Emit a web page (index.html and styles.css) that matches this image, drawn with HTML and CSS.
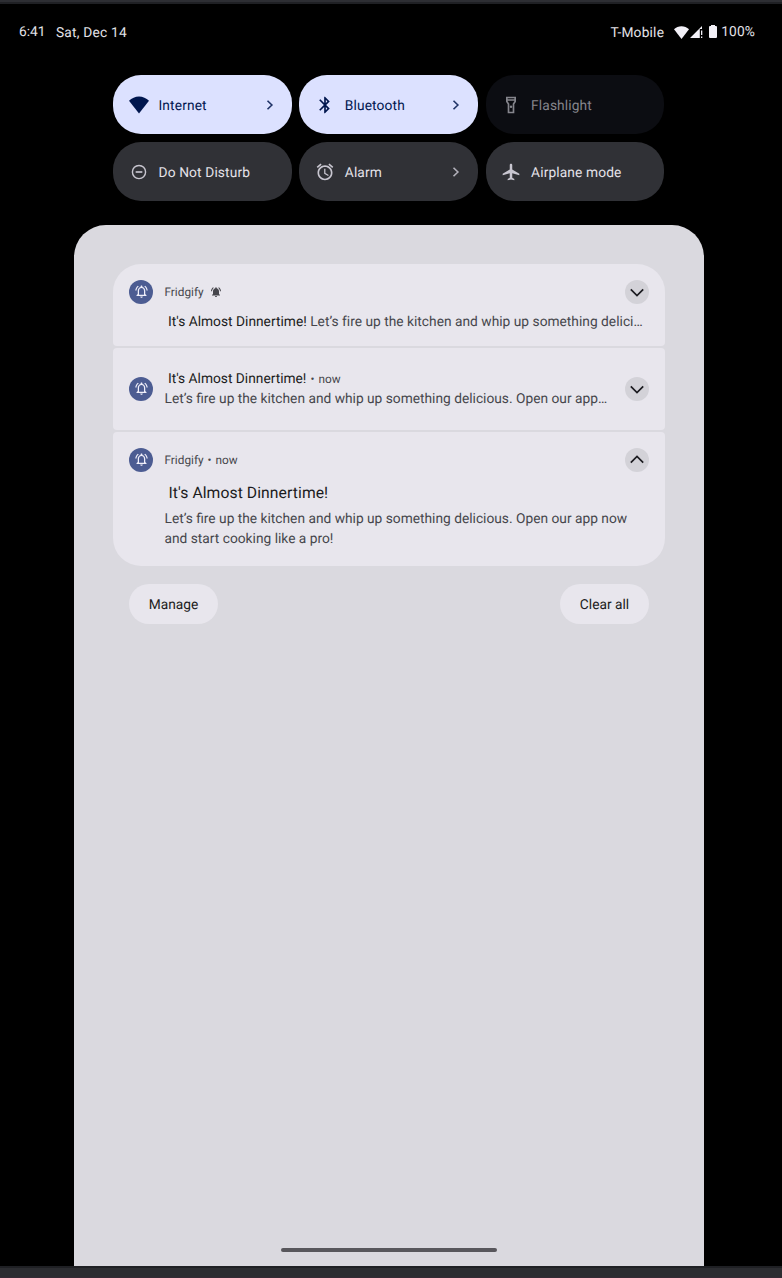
FILE: index.html
```html
<!DOCTYPE html>
<html lang="en">
<head>
<meta charset="utf-8">
<title>Notifications</title>
<link rel="stylesheet" href="styles.css">
</head>
<body>
<svg class="defs" width="0" height="0" aria-hidden="true">
  <symbol id="bell" viewBox="0 0 24 24"><path d="M12 22c1.100 0 2-.9 2-2h-4c0 1.100.9 2 2 2zm6-6v-5c0-3.070-1.630-5.640-4.500-6.320V4c0-.83-.67-1.500-1.500-1.500s-1.500.67-1.500 1.500v.68C7.640 5.360 6 7.920 6 11v5l-2 2v1h16v-1l-2-2zm-2 1H8v-6c0-2.480 1.510-4.500 4-4.500s4 2.020 4 4.500v6zM7.580 4.080L6.150 2.650C3.750 4.480 2.170 7.300 2.030 10.500h2c.15-2.650 1.510-4.970 3.550-6.420zm12.390 6.420h2c-.15-3.200-1.730-6.020-4.120-7.850l-1.420 1.430c2.020 1.450 3.390 3.770 3.540 6.420z"/></symbol>
  <symbol id="bell-solid" viewBox="0 0 24 24"><path d="M12 22c1.100 0 2-.9 2-2h-4c0 1.100.9 2 2 2zm6-6v-5c0-3.070-1.630-5.640-4.500-6.320V4c0-.83-.67-1.500-1.500-1.500s-1.500.67-1.500 1.500v.68C7.640 5.360 6 7.920 6 11v5l-2 2v1h16v-1l-2-2zM7.580 4.080L6.150 2.650C3.750 4.480 2.170 7.300 2.030 10.500h2c.15-2.650 1.510-4.970 3.550-6.420zm12.390 6.420h2c-.15-3.200-1.730-6.020-4.120-7.850l-1.420 1.430c2.020 1.450 3.390 3.770 3.540 6.420z"/></symbol>
  <symbol id="wifi" viewBox="0 0 20 17"><path d="M0 4.300C2.800 1.600 6.200 0 10 0s7.200 1.600 10 4.300L10 17z"/></symbol>
  <symbol id="next" viewBox="0 0 8 12"><path d="M1.500 1.700 5.900 6 1.500 10.300" fill="none" stroke="currentColor" stroke-width="1.600"/></symbol>
  <symbol id="down" viewBox="0 0 24 24"><path d="m5.800 9.300 6.200 6.200 6.200-6.200" fill="none" stroke="currentColor" stroke-width="1.700"/></symbol>
</svg>
<div class="screen">
  <header class="status">
    <span class="time">6:41</span>
    <span class="date">Sat, Dec 14</span>
    <span class="carrier">T-Mobile</span>
    <svg class="status-wifi"><use href="#wifi"/></svg>
    <svg class="signal" viewBox="0 0 13 12"><path d="M0 12 12 0v3H9.800v9zM11 4.500h1.300V9H11zM11 10.500h1.300V12H11z"/></svg>
    <svg class="battery" viewBox="0 0 8 13"><path d="M2 0h4v1h1q1 0 1 1v10q0 1-1 1H1q-1 0-1-1V2q0-1 1-1h1z"/></svg>
    <span class="percent">100%</span>
  </header>

  <section class="tiles">
    <div class="tile on"><svg class="tile-icon"><use href="#wifi"/></svg><span class="label">Internet</span><svg class="next"><use href="#next"/></svg></div>
    <div class="tile on"><svg class="tile-icon" viewBox="0 0 24 24"><path d="M17.710 7.710 12 2h-1v7.590L6.410 5 5 6.410 10.590 12 5 17.590 6.410 19 11 14.410V22h1l5.710-5.710-4.300-4.290 4.300-4.290zM13 5.830l1.880 1.880L13 9.590V5.830zm1.880 10.460L13 18.170v-3.760l1.880 1.880z"/></svg><span class="label">Bluetooth</span><svg class="next"><use href="#next"/></svg></div>
    <div class="tile dim"><svg class="tile-icon" viewBox="0 0 24 24"><path d="M6 2v6l2 3v11h8V11l2-3V2H6zm10 2v1H8V4h8zm-2 6.400V20h-4v-9.600L8 7.400V7h8v.4l-2 3z"/><circle cx="12" cy="14" r="1.500"/></svg><span class="label">Flashlight</span></div>
    <div class="tile"><svg class="tile-icon" viewBox="0 0 24 24"><circle cx="12" cy="12" r="7.900" fill="none" stroke="currentColor" stroke-width="1.700"/><path d="M8 11h8v2H8z"/></svg><span class="label">Do Not Disturb</span></div>
    <div class="tile"><svg class="tile-icon" viewBox="0 0 24 24"><path d="M12.500 8H11v6l4.750 2.850.75-1.230-4-2.370V8zm4.837-6.190 4.607 3.845-1.280 1.535-4.610-3.843 1.282-1.536zm-10.674 0 1.282 1.536L3.337 7.190l-1.280-1.536L6.663 1.810zM12 4c-4.970 0-9 4.030-9 9s4.030 9 9 9 9-4.030 9-9-4.030-9-9-9zm0 16c-3.860 0-7-3.140-7-7s3.140-7 7-7 7 3.140 7 7-3.140 7-7 7z"/></svg><span class="label">Alarm</span><svg class="next"><use href="#next"/></svg></div>
    <div class="tile"><svg class="tile-icon" viewBox="0 0 24 24"><path d="M22 16v-2l-8.500-5V3.500c0-.83-.67-1.500-1.500-1.500s-1.500.67-1.500 1.500V9L2 14v2l8.500-2.500V19L8 20.500V22l4-1 4 1v-1.500L13.500 19v-5.500L22 16z"/></svg><span class="label">Airplane mode</span></div>
  </section>

  <main class="panel">
    <article class="card first">
      <span class="app"><svg><use href="#bell"/></svg></span>
      <div class="body">
        <div class="meta"><span>Fridgify</span><svg class="alert"><use href="#bell-solid"/></svg></div>
        <div class="line summary"><b class="title">It's Almost Dinnertime!</b> Let’s fire up the kitchen and whip up something delici…</div>
      </div>
      <span class="toggle"><svg><use href="#down"/></svg></span>
    </article>
    <article class="card second">
      <span class="app"><svg><use href="#bell"/></svg></span>
      <div class="body">
        <div class="line heading"><b class="title">It's Almost Dinnertime!</b><span class="small">•</span><span class="small">now</span></div>
        <div class="line">Let’s fire up the kitchen and whip up something delicious. Open our app…</div>
      </div>
      <span class="toggle"><svg><use href="#down"/></svg></span>
    </article>
    <article class="card third">
      <span class="app"><svg><use href="#bell"/></svg></span>
      <div class="body">
        <div class="meta"><span>Fridgify</span><span>•</span><span>now</span></div>
        <div class="big">It's Almost Dinnertime!</div>
        <div class="line">Let’s fire up the kitchen and whip up something delicious. Open our app now</div>
        <div class="line">and start cooking like a pro!</div>
      </div>
      <span class="toggle up"><svg><use href="#down"/></svg></span>
    </article>
    <div class="actions"><button class="btn">Manage</button><button class="btn">Clear all</button></div>
    <div class="home"></div>
  </main>
  <footer class="edge"></footer>
</div>
</body>
</html>
```
FILE: styles.css
```css
* { box-sizing: border-box; }
body { margin: 0; background: #000; font-family: Roboto, sans-serif; font-size: 13.750px; text-rendering: geometricPrecision; }
svg { display: block; fill: currentColor; flex: none; }
.defs { position: absolute; }
.screen { height: 1278px; display: flex; flex-direction: column; border-top: 2px solid #2d2e33; }
.status { height: 58px; padding: 0 27px 0 19px; display: flex; align-items: center; color: #e3e2e8; white-space: nowrap; border-top: 2px solid #1f2024; }
.time { width: 27px; margin-right: 10px; margin-top: -1px; }
.date { letter-spacing: .2px; margin-top: 2px; }
.carrier { margin-left: auto; margin-right: 10px; margin-top: 2px; letter-spacing: .2px; }
.status-wifi { width: 15px; height: 13px; margin-right: 1px; color: #f2f0f7; }
.signal { width: 13px; height: 12px; margin-right: 6px; color: #f2f0f7; }
.battery { width: 8px; height: 13px; margin-right: 4px; margin-top: -1px; color: #f2f0f7; }
.percent { margin-top: -1px; letter-spacing: .15px; }
.tiles { display: grid; grid-template-columns: repeat(3, 178.500px); gap: 8px 7.800px; margin: 15px 0 0 113px; }
.tile { height: 59px; border-radius: 28px; padding: 0 17.500px 0 15.700px; display: flex; align-items: center; background: #303136; color: #c8c6d0; }
.tile-icon { width: 20px; height: 20px; margin-right: 9.800px; }
.label { color: #e4e2e9; letter-spacing: .13px; padding-top: 2px; }
.on { background: #dce1ff; color: #00164e; }
.on .label { color: #00164e; }
.dim { background: #0c0d12; color: #85858c; }
.dim .label { color: #85858c; }
.next { width: 8px; height: 12px; margin-left: auto; opacity: .85; }
.panel { flex: 1; width: 630px; margin: 24px 0 0 74px; padding: 39px 39px 0; background: #dad9df; border-radius: 32px 32px 0 0; display: flex; flex-direction: column; }
.card { display: flex; align-items: flex-start; padding: 16px; margin-bottom: 2px; background: #e8e6ed; color: #46464c; border-radius: 4px; height: 82px; width: 552px; }
.first { border-radius: 28px 28px 4px 4px; }
.third { height: 134px; border-radius: 4px 4px 28px 28px; margin-bottom: 0; }
.app { width: 24px; height: 24px; border-radius: 50%; background: #4c5c92; color: #f0effa; flex: none; display: grid; place-items: center; margin-right: 11.500px; }
.app svg { width: 15px; height: 15px; margin-bottom: 1px; }
.third .app, .third .toggle { margin-top: -.5px; }
.body { flex: 1; width: 0; white-space: nowrap; }
.meta { display: flex; align-items: center; gap: 4px; height: 24px; font-size: 11.800px; }
.alert { width: 12px; height: 12px; margin-left: 2px; }
.line { height: 20px; line-height: 20px; }
.title { font-weight: 400; color: #1b1b20; }
.summary { padding-left: 3.500px; margin-top: 8px; letter-spacing: .015px; }
.heading { display: flex; gap: 4px; padding-left: 3.500px; }
.small { font-size: 11.800px; }
.big { font-size: 15.700px; line-height: 24px; color: #1b1b20; padding-left: 4px; margin: 9px 0 4px; letter-spacing: .08px; }
.second { align-items: center; }
.toggle { width: 24px; height: 24px; border-radius: 50%; background: #d3d2d8; color: #1b1b20; flex: none; }
.toggle svg { width: 24px; height: 24px; }
.up { transform: scaleY(-1); }
.actions { display: flex; justify-content: space-between; padding: 18px 16px 0; }
.btn { width: 89px; height: 40px; padding: 1px 0 0; border: 0; border-radius: 20px; background: #e8e6ed; color: #1b1b20; font: 13.750px Roboto, sans-serif; text-rendering: geometricPrecision; }
.home { width: 216px; height: 4px; border-radius: 2px; background: #58575c; margin: auto auto 14px 168px; }
.edge { height: 12px; background: #2c2d31; border-top: 2px solid #1f2024; border-bottom: 1px solid #352b35; }
```
